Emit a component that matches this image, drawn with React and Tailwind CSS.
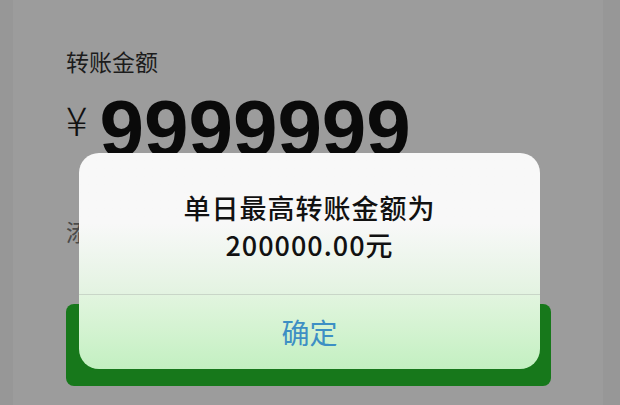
import React from "react";

const cjk = { fontFamily: '"Noto Sans CJK SC", "Noto Sans", sans-serif' };

export default function App() {
  return (
    <div className="relative w-[620px] h-[405px] overflow-hidden bg-[#979797] flex px-[13px] pr-[17px]" style={cjk}>
      {/* page panel */}
      <div className="flex-1 bg-[#9c9c9c] flex flex-col pl-[53px] pr-[52px]">
        <div className="pt-[47px] text-[23px] leading-[28px] text-[#1c1c1c]">转账金额</div>

        <div className="flex items-start mt-[14px] h-[78px]">
          <span className="mt-[10px] text-[40px] leading-none font-light text-[#111]">¥</span>
          <span
            className="ml-[12px] text-[80px] font-bold leading-none text-[#0a0a0a]"
            style={{ fontFamily: '"Liberation Sans", sans-serif' }}
          >
            9999999
          </span>
        </div>

        <div className="mt-[50px] text-[23px] leading-[28px] text-[#4a4a4a]">添加转账说明</div>

        {/* confirm button under dialog */}
        <div className="mt-[59px] h-[82px] rounded-[8px] bg-[#17781b]"></div>
      </div>

      {/* alert dialog */}
      <div className="absolute left-[79px] top-[153px] w-[461px] h-[216px] rounded-[20px] overflow-hidden flex flex-col">
        <div className="h-[141px] flex flex-col items-center pt-[36px] text-[27px] leading-[37px] font-medium tracking-[1px] text-[#111] bg-gradient-to-b from-[#f8f8f8] from-50% to-[#e3f3e1]">
          <div>单日最高转账金额为</div>
          <div>200000.00元</div>
        </div>
        <div className="h-[1px] bg-[#c9d6c8]"></div>
        <div className="flex-1 flex items-center justify-center text-[28px] text-[#3d8fc4] bg-gradient-to-b from-[#e2f5df] to-[#c3f0c1]">
          确定
        </div>
      </div>
    </div>
  );
}
